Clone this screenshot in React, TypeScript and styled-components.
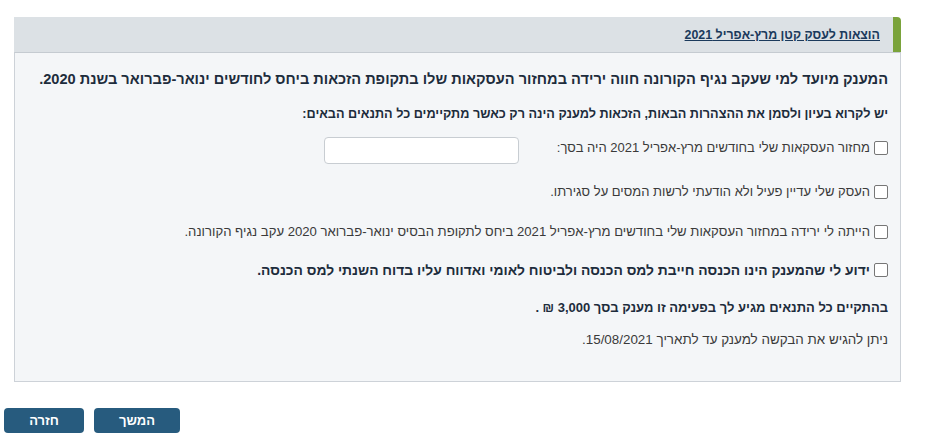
import React from 'react'
import styled, { createGlobalStyle } from 'styled-components'

const GlobalStyle = createGlobalStyle`
	html, body {
		margin: 0;
		padding: 0;
		background: #fff;
	}
	body {
		font-family: 'Liberation Sans', Arial, sans-serif;
		color: #333;
	}
`

const Page = styled.div`
	direction: rtl;
	width: 931px;
	padding: 17px 30px 0 4px;
	box-sizing: border-box;
`

const Panel = styled.section`
	width: 887px;
`

const PanelHeader = styled.div`
	height: 35px;
	background: #dce1e5;
	border-right: 8px solid #7aa33b;
	border-top-right-radius: 4px;
	display: flex;
	align-items: center;
	padding: 0 13px 0 0;
	box-sizing: border-box;
`

const HeaderTitle = styled.a`
	font-size: 12.4px;
	font-weight: bold;
	color: #1b3a5c;
	text-decoration: underline;
	cursor: pointer;
`

const PanelBody = styled.div`
	background: #f4f6f8;
	border: 1px solid #cdd2d8;
	border-top: 1px solid #c5cbd1;
	height: 330px;
	box-sizing: border-box;
	padding: 17px 12px 0 0;
	display: flex;
	flex-direction: column;
`

const Lead = styled.p`
	margin: 0;
	font-size: 14.6px;
	font-weight: bold;
	color: #1d2c3c;
	line-height: 18px;
`

const SubLead = styled.p`
	margin: 18px 0 0;
	font-size: 12.7px;
	font-weight: bold;
	color: #1d2c3c;
	line-height: 16px;
`

const CheckRow = styled.label<{ $gap: number }>`
	display: flex;
	align-items: flex-start;
	gap: 4px;
	margin-top: ${p => p.$gap}px;
	line-height: 16px;
	color: #3a3a3a;
`

const Box = styled.span`
	width: 12px;
	height: 12px;
	margin-top: 2px;
	border: 1px solid #767676;
	border-radius: 2px;
	background: #fff;
	flex: none;
`

const RowText = styled.span<{ $bold?: boolean; $size?: number }>`
	padding-top: 1px;
	font-size: ${p => p.$size ?? 13}px;
	font-weight: ${p => (p.$bold ? 'bold' : 'normal')};
	color: ${p => (p.$bold ? '#1d2c3c' : '#3a3a3a')};
`

const AmountInput = styled.input`
	width: 195px;
	height: 27px;
	box-sizing: border-box;
	margin: -2px 34px 0 0;
	border: 1px solid #c8cdd2;
	border-radius: 4px;
	background: #fff;
`

const Note = styled.p<{ $bold?: boolean; $gap: number; $size?: number }>`
	margin: ${p => p.$gap}px 0 0;
	font-size: ${p => p.$size ?? 13}px;
	line-height: 16px;
	font-weight: ${p => (p.$bold ? 'bold' : 'normal')};
	color: ${p => (p.$bold ? '#1d2c3c' : '#3a3a3a')};
`

const Footer = styled.div`
	direction: ltr;
	display: flex;
	gap: 10px;
	padding-top: 26px;
`

const Button = styled.button<{ $w: number }>`
	width: ${p => p.$w}px;
	height: 25px;
	border: none;
	border-radius: 4px;
	background: #275b7e;
	color: #fff;
	font-family: 'Liberation Sans', Arial, sans-serif;
	font-size: 13px;
	font-weight: bold;
	cursor: pointer;
`

export default function App() {
	return (
		<>
			<GlobalStyle />
			<Page>
				<Panel>
					<PanelHeader>
						<HeaderTitle>הוצאות לעסק קטן מרץ-אפריל 2021</HeaderTitle>
					</PanelHeader>
					<PanelBody>
						<Lead>
							המענק מיועד למי שעקב נגיף הקורונה חווה ירידה במחזור העסקאות שלו בתקופת הזכאות ביחס לחודשים ינואר-פברואר בשנת 2020.
						</Lead>
						<SubLead>
							יש לקרוא בעיון ולסמן את ההצהרות הבאות, הזכאות למענק הינה רק כאשר מתקיימים כל התנאים הבאים:
						</SubLead>
						<CheckRow $gap={17}>
							<Box />
							<RowText>מחזור העסקאות שלי בחודשים מרץ-אפריל 2021 היה בסך:</RowText>
							<AmountInput />
						</CheckRow>
						<CheckRow $gap={19}>
							<Box />
							<RowText>העסק שלי עדיין פעיל ולא הודעתי לרשות המסים על סגירתו.</RowText>
						</CheckRow>
						<CheckRow $gap={23}>
							<Box />
							<RowText $size={13.15}>הייתה לי ירידה במחזור העסקאות שלי בחודשים מרץ-אפריל 2021 ביחס לתקופת הבסיס ינואר-פברואר 2020 עקב נגיף הקורונה.</RowText>
						</CheckRow>
						<CheckRow $gap={21}>
							<Box />
							<RowText $bold $size={13.85}>ידוע לי שהמענק הינו הכנסה חייבת למס הכנסה ולביטוח לאומי ואדווח עליו בדוח השנתי למס הכנסה.</RowText>
						</CheckRow>
						<Note $bold $gap={22}>
							בהתקיים כל התנאים מגיע לך בפעימה זו מענק בסך 3,000 ₪ .
						</Note>
						<Note $gap={16} $size={13.4}>ניתן להגיש את הבקשה למענק עד לתאריך 15/08/2021.</Note>
					</PanelBody>
				</Panel>
				<Footer>
					<Button $w={80}>חזרה</Button>
					<Button $w={86}>המשך</Button>
				</Footer>
			</Page>
		</>
	)
}
